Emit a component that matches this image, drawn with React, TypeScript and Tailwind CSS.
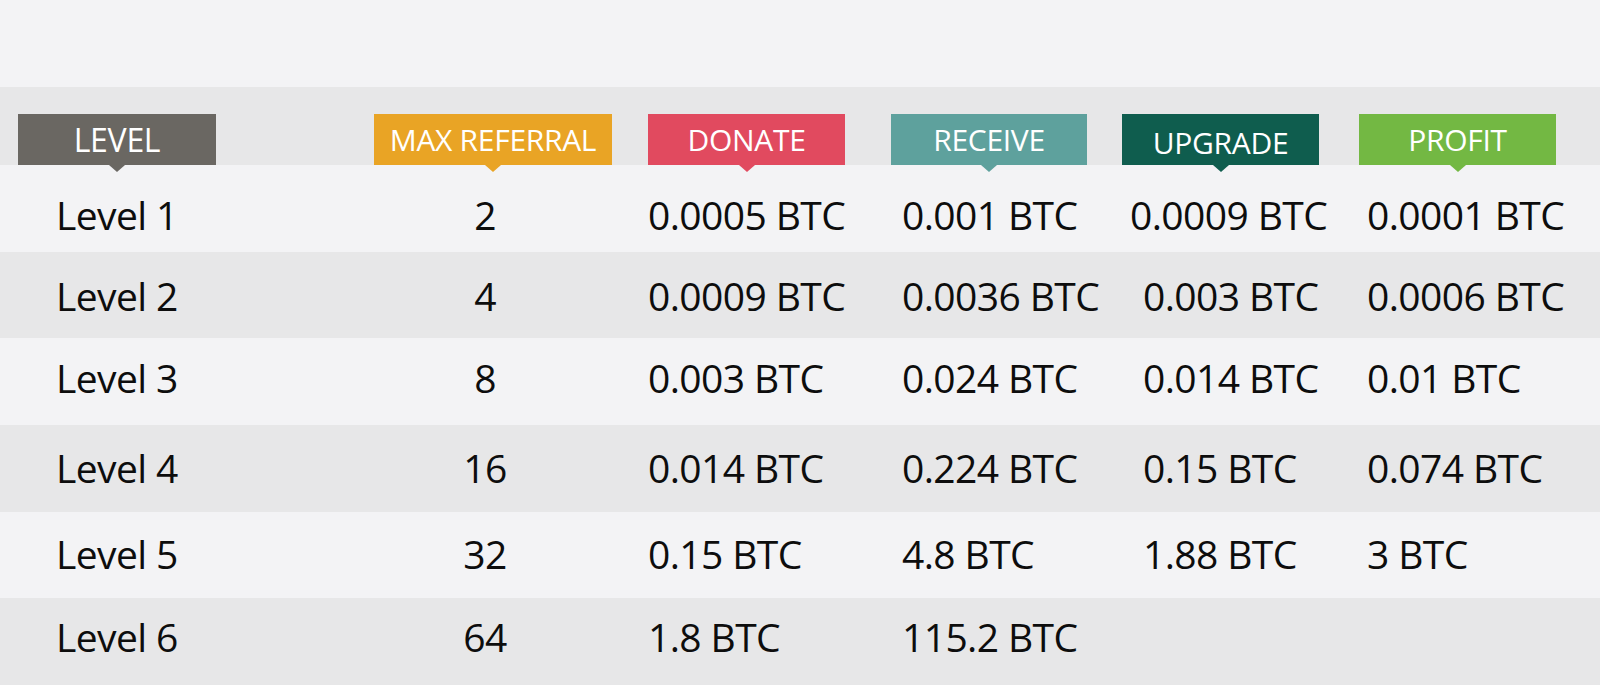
const cols = [
  "w-[198px] ml-[18px]",
  "w-[238px] ml-[158px]",
  "w-[197px] ml-[36px]",
  "w-[196px] ml-[46px]",
  "w-[197px] ml-[35px]",
  "w-[197px] ml-[40px]",
];

const headers = [
  { label: "LEVEL", bg: "bg-[#6a6762]", tip: "border-t-[#6a6762]", text: "text-[32px]" },
  { label: "MAX REFERRAL", bg: "bg-[#e9a425]", tip: "border-t-[#e9a425]", text: "text-[30px]" },
  { label: "DONATE", bg: "bg-[#e14a5f]", tip: "border-t-[#e14a5f]", text: "text-[30px]" },
  { label: "RECEIVE", bg: "bg-[#5ea19d]", tip: "border-t-[#5ea19d]", text: "text-[30px]" },
  { label: "UPGRADE", bg: "bg-[#0f5d4e]", tip: "border-t-[#0f5d4e]", text: "text-[30px] pt-[7px]" },
  { label: "PROFIT", bg: "bg-[#73b843]", tip: "border-t-[#73b843]", text: "text-[30px]" },
];

const rows = [
  ["Level 1", "2", "0.0005 BTC", "0.001 BTC", "0.0009 BTC", "0.0001 BTC"],
  ["Level 2", "4", "0.0009 BTC", "0.0036 BTC", "0.003 BTC", "0.0006 BTC"],
  ["Level 3", "8", "0.003 BTC", "0.024 BTC", "0.014 BTC", "0.01 BTC"],
  ["Level 4", "16", "0.014 BTC", "0.224 BTC", "0.15 BTC", "0.074 BTC"],
  ["Level 5", "32", "0.15 BTC", "4.8 BTC", "1.88 BTC", "3 BTC"],
  ["Level 6", "64", "1.8 BTC", "115.2 BTC", "", ""],
];

// the picture's rows don't sit their text at exactly the same height
const rowShift = ["pt-[12px]", "pt-0", "pb-[8px]", "pb-[2px]", "pb-[4px]", "pb-[11px]"];

// where the text sits inside each column
const cellText = [
  "pl-[38px]",
  "justify-center pr-[16px]",
  "-ml-[3px]",
  "pl-[11px]",
  "pl-[21px]",
  "pl-[8px]",
];

export default function App() {
  return (
    <div className="flex flex-col w-[1600px] h-[685px] overflow-hidden bg-[#f3f3f5] font-['Open_Sans',sans-serif] text-[#0d0d0d]">
      <div className="h-[87px] shrink-0 bg-[#f3f3f5]" />

      {/* header band with the coloured tags */}
      <div className="relative z-10 flex items-end h-[78px] shrink-0 bg-[#e7e7e8]">
        {headers.map((h, i) => (
          <div
            key={h.label}
            className={`relative flex justify-center items-center h-[51px] shrink-0 ${cols[i]} ${h.bg}`}
          >
            <span className={`leading-none text-white tracking-[-0.3px] ${h.text}`}>
              {h.label}
            </span>
            <span
              className={`absolute top-full left-1/2 -translate-x-1/2 w-0 h-0 border-l-[8px] border-r-[8px] border-t-[7px] border-l-transparent border-r-transparent ${h.tip}`}
            />
          </div>
        ))}
      </div>

      {/* level rows */}
      <div className="flex flex-col flex-1">
        {rows.map((row, r) => (
          <div
            key={row[0]}
            className={`flex flex-1 items-center ${r % 2 === 0 ? "bg-[#f3f3f5]" : "bg-[#e7e7e8]"}`}
          >
            {row.map((value, i) => (
              <div key={i} className={`flex shrink-0 ${cols[i]} ${cellText[i]}`}>
                <span
                  className={`whitespace-nowrap text-[39px] leading-none tracking-[-0.6px] ${rowShift[r]} ${
                    r === 0 && i === 4 ? "-ml-[13px]" : ""
                  }`}
                >
                  {value}
                </span>
              </div>
            ))}
          </div>
        ))}
      </div>
    </div>
  );
}
